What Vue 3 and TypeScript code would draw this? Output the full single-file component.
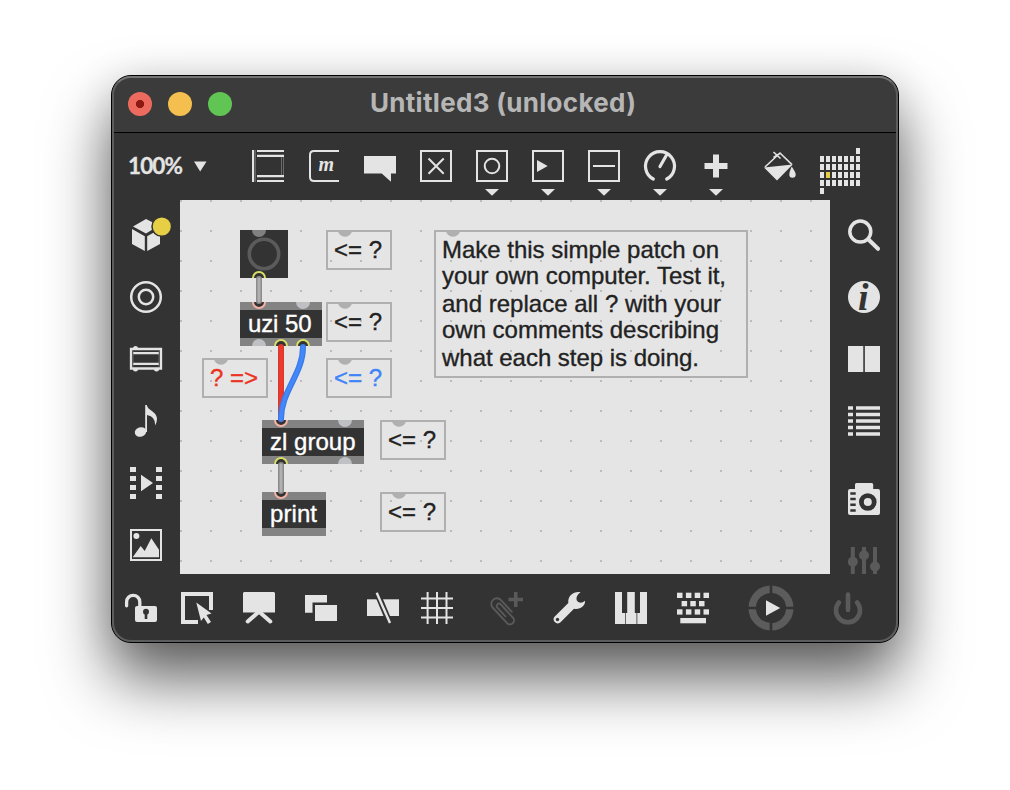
<script setup lang="ts">
interface Port { x: number; on: boolean }
interface Box { x: number; y: number; w: number; label: string; tw: number; inlets: Port[]; outlets: Port[] }
interface Comment { x: number; y: number; w: number; h: number; lines: string[]; widths: number[]; tone: string }

const boxes: Box[] = [
  { x: 240, y: 302, w: 82, label: 'uzi 50', tw: 63.5, inlets: [{ x: 259, on: true }, { x: 303, on: false }], outlets: [{ x: 259, on: false }, { x: 281, on: true }, { x: 303, on: true }] },
  { x: 262, y: 420, w: 102, label: 'zl group', tw: 85.5, inlets: [{ x: 281, on: true }, { x: 345, on: false }], outlets: [{ x: 281, on: true }, { x: 345, on: false }] },
  { x: 262, y: 492, w: 64, label: 'print', tw: 47, inlets: [{ x: 281, on: true }], outlets: [] },
]
const note = (x: number, y: number, text = '<= ?', tone = 'ink'): Comment =>
  ({ x, y, w: 66, h: 40, lines: [text], widths: [48], tone })
const comments: Comment[] = [
  note(326, 230), note(326, 302), note(202, 358, '? =>', 'red'), note(326, 358, '<= ?', 'blue'), note(380, 420), note(380, 492),
  {
    x: 434, y: 230, w: 314, h: 148, tone: 'ink',
    lines: ['Make this simple patch on', 'your own computer. Test it,', 'and replace all ? with your', 'own comments describing', 'what each step is doing.'],
    widths: [277, 284, 279, 277, 257],
  },
]
// Baselines of wrapped comment text, measured from the top of the box
const baselines: number[] = [28, 54, 82, 108, 136]
const cells: { x: number; y: number; hot: boolean }[] = [{ x: 36, y: 0, hot: false }, { x: 0, y: 40, hot: false }]
for (let r = 0; r < 4; r++) for (let c = 0; c < 7; c++) cells.push({ x: c * 6, y: 8 + r * 8, hot: r === 2 && c === 1 })
const keys: number[][] = [[0, .7], [8.9, .7], [17.7, .7], [26.5, .7], [4.6, 9], [13.3, 9], [22, 9], [0, 17.3], [8.9, 17.3], [17.7, 17.3], [26.5, 17.3]]
</script>

<template>
  <div class="desk">
    <div class="window">
      <header class="titlebar">
        <i class="light close"></i><i class="light min"></i><i class="light max"></i>
        <h1><svg width="268" height="36"><text x="0" y="26" textLength="266">Untitled3 (unlocked)</text></svg></h1>
      </header>

      <div class="toolbar">
        <div class="zoom">
          <svg width="80" height="32"><text x="0" y="24" textLength="55">100%</text><path d="M66 11.500H78.500L72.200 21.500Z" /></svg>
        </div>
        <div class="tools">
          <svg class="ic" viewBox="0 0 32 32"><path d="M0 0H2.200V32H0ZM5 0H32V2.100H5ZM5 4.700H32V6.900H5ZM5 25H32V27.200H5ZM5 29.900H32V32H5Z" /><path class="faint" d="M3.400 0V32M29.500 7V25M31.500 7V25" /></svg>
          <svg class="ic" viewBox="0 0 32 32"><path class="ln" d="M31 1H6Q2 1 2 5V27Q2 31 6 31H31" /><text class="m" x="10.500" y="21" textLength="15.500">m</text></svg>
          <svg class="ic" viewBox="0 0 32 32"><path d="M0 6H32V23.500H27V31.700L17.700 23.500H0Z" /></svg>
          <svg class="ic" viewBox="0 0 32 32"><path class="ln" d="M1 1H31V31H1ZM8.500 8.500L23.700 23.700M23.700 8.500L8.500 23.700" /></svg>
          <svg class="ic" viewBox="0 0 32 32"><path class="ln" d="M1 1H31V31H1Z" /><circle class="ln" cx="16" cy="16" r="7.300" /><path d="M9 39H23L16 45.800Z" /></svg>
          <svg class="ic" viewBox="0 0 32 32"><path class="ln" d="M1 1H31V31H1Z" /><path d="M5 10L15.700 16L5 22Z" /><path d="M9 39H23L16 45.800Z" /></svg>
          <svg class="ic" viewBox="0 0 32 32"><path class="ln" d="M1 1H31V31H1ZM5 16H27" /><path d="M9 39H23L16 45.800Z" /></svg>
          <svg class="ic" viewBox="0 0 32 32"><path class="ln dial" d="M9.300 29A14.500 14.500 0 1 1 22.700 29M16 16.500L22 6" /><path d="M9 39H23L16 45.800Z" /></svg>
          <svg class="ic" viewBox="0 0 32 32"><path d="M13 4.500H19V13H27.500V19H19V27.500H13V19H4.500V13H13Z" /><path d="M9 39H23L16 45.800Z" /></svg>
          <svg class="ic bucket" viewBox="0 0 32 32"><path d="M0 17.600L28.700 14.600L13 30.600Z" /><path class="ln fine" d="M1 17L16 3L28 14.600M9.500 2L16.500 8.500M9.500 7.500L16.500 3" /><path d="M27.700 16.500Q31.800 22.500 31.700 24.500A3.200 3.200 0 0 1 25.300 24.500Q25.300 22 27.700 16.500Z" /></svg>
        </div>
        <svg class="matrix" width="40" height="46"><rect v-for="(c, i) in cells" :key="i" :x="c.x" :y="c.y" width="4" height="6" :class="{ hot: c.hot }" /></svg>
      </div>

      <main class="middle">
        <nav class="side">
          <svg class="ic" viewBox="0 0 32 32"><path d="M16 0L29 6.500L16 14.500L3 7.500ZM2 10L14.800 17.200V32L2 25ZM17.200 17.200L30 10V25L17.200 32Z" /><circle class="badge" cx="31.800" cy="7.500" r="9.800" /></svg>
          <svg class="ic" viewBox="0 0 32 32"><circle class="ln ring" cx="16" cy="16" r="14.800" /><circle class="ln ring" cx="16" cy="16" r="7.200" /></svg>
          <svg class="ic" viewBox="0 0 32 32"><path class="ln amp" d="M1 6H31V25.500H1ZM3 10.200H29M3 20.800H29" /><path class="faint" d="M3 8V24M29 8V24" /><path d="M3 5.500A2.500 2.500 0 0 1 8 5.500ZM3 26A2.500 2.500 0 0 0 8 26ZM24 26A2.500 2.500 0 0 0 29 26Z" /></svg>
          <svg class="ic" viewBox="0 0 32 32"><ellipse cx="10.500" cy="27" rx="5.800" ry="4.700" transform="rotate(-18 10.500 27)" /><path d="M15.200 0H16.800C17.500 5.500 26.500 6 27 13.500Q27 17.500 25.200 20.500Q25.700 11.500 17 10V27H15.200Z" /></svg>
          <svg class="ic" viewBox="0 0 32 32"><path d="M0 0H6V5H0ZM0 9H6V14H0ZM0 18H6V23H0ZM0 27H6V32H0ZM26 0H32V5H26ZM26 9H32V14H26ZM26 18H32V23H26ZM26 27H32V32H26ZM11 7.700L23 16L11 24.200Z" /></svg>
          <svg class="ic" viewBox="0 0 32 32"><path class="ln" d="M1 1H31V31H1Z" /><circle cx="6.400" cy="7" r="3" /><path d="M2.700 28.300L10.700 17L14.700 22L21.300 9.300L29 20.700V28.300Z" /></svg>
        </nav>

        <svg class="patcher" width="650" height="374" viewBox="180 200 650 374">
          <defs>
            <pattern id="dots" x="180" y="200" width="30" height="30" patternUnits="userSpaceOnUse"><rect class="dot" width="2" height="2" /></pattern>
          </defs>
          <rect class="bg" x="180" y="200" width="650" height="374" />
          <rect x="180" y="200" width="650" height="374" fill="url(#dots)" />

          <g v-for="(c, i) in comments" :key="'c' + i">
            <rect class="frame" :x="c.x + 1" :y="c.y + 1" :width="c.w - 2" :height="c.h - 2" />
            <path class="tab" :d="`M${c.x + 12} ${c.y}a7 6.800 0 0 0 14 0z`" />
            <text v-for="(l, n) in c.lines" :key="n" :class="c.tone" :x="c.x + 8" :y="c.y + baselines[n]" :textLength="c.widths[n]">{{ l }}</text>
          </g>

          <rect class="core" x="240" y="230" width="48" height="48" />
          <path class="dim" d="M252 230a7 7 0 0 0 14 0z" />
          <circle class="bang" cx="264" cy="254" r="14.700" />
          <path class="out" d="M253 278a6 6 0 0 1 12 0" />

          <g v-for="(b, i) in boxes" :key="'b' + i">
            <rect class="rail" :x="b.x" :y="b.y" :width="b.w" height="44" />
            <rect class="core" :x="b.x" :y="b.y + 8" :width="b.w" height="28" />
            <path v-for="(p, n) in b.inlets" :key="'i' + n" :class="p.on ? 'in' : 'idle'" :d="p.on ? `M${p.x - 6} ${b.y}a6 6 0 0 0 12 0` : `M${p.x - 7} ${b.y}a7 7 0 0 0 14 0z`" />
            <path v-for="(p, n) in b.outlets" :key="'o' + n" :class="p.on ? 'out' : 'idle'" :d="p.on ? `M${p.x - 6} ${b.y + 44}a6 6 0 0 1 12 0` : `M${p.x - 7} ${b.y + 44}a7 7 0 0 1 14 0z`" />
            <text class="label" :x="b.x + 8" :y="b.y + 29.500" :textLength="b.tw">{{ b.label }}</text>
          </g>

          <path class="wire edge" d="M259 279V301M281 465V491" />
          <path class="wire" d="M259 279V301M281 465V491" />
          <path class="wire red-edge" d="M281 347V419" />
          <path class="wire red-line" d="M281 347V419" />
          <path class="wire blue-edge" d="M303 347C303 374 281 391 281 419" />
          <path class="wire blue-line" d="M303 347C303 374 281 391 281 419" />
        </svg>

        <nav class="side right">
          <svg class="ic" viewBox="0 0 32 32"><circle class="ln lens" cx="12.300" cy="12.600" r="10.500" /><path class="ln handle" d="M20.500 20.500L30 29.800" /></svg>
          <svg class="ic" viewBox="0 0 32 32"><circle cx="16" cy="16" r="16" /><text class="info" x="10" y="28.500">i</text></svg>
          <svg class="ic" viewBox="0 0 32 32"><path d="M0 3H15.200V29H0ZM17 3H32V29H17Z" /><path class="faint" d="M16 3V29" /></svg>
          <svg class="ic" viewBox="0 0 32 32"><path d="M0 1.200H5V4.800H0ZM8 1.200H32V4.800H8ZM0 7.700H5V11.300H0ZM8 7.700H32V11.300H8ZM0 14.200H5V17.800H0ZM8 14.200H32V17.800H8ZM0 20.700H5V24.300H0ZM8 20.700H32V24.300H8ZM0 27.200H5V30.800H0ZM8 27.200H32V30.800H8Z" /></svg>
          <svg class="ic camera" viewBox="0 0 32 32"><path d="M7 6V1.500Q7 0 8.500 0H23.700Q25.200 0 25.200 1.500V6H30Q32 6 32 8V30Q32 32 30 32H2Q0 32 0 30V8Q0 6 2 6Z" /><circle class="hole" cx="19.800" cy="19" r="6.400" /><path class="cut" d="M2.300 9.200H7.700V11.700H2.300ZM2.300 14.800H7.700V17.300H2.300ZM2.300 20.500H7.700V23H2.300ZM2.300 26.200H7.700V28.700H2.300Z" /></svg>
          <svg class="ic off mixer" viewBox="0 0 32 29"><path d="M2.800 2H6.800V29H2.800ZM14 2H18V29H14ZM25 2H29V29H25Z" /><circle cx="4.800" cy="16.800" r="5" /><circle cx="16" cy="10.300" r="5" /><circle cx="27" cy="21.500" r="5" /></svg>
        </nav>
      </main>

      <footer class="dock">
        <svg class="ic" viewBox="0 0 32 32"><path d="M12 14H30Q32 14 32 16V28Q32 30 30 30H12Q10 30 10 28V16Q10 14 12 14Z" /><path class="ln shackle" d="M1.600 13.800V9.900A6.600 6.600 0 0 1 14.800 9.900V14" /><circle class="cut" cx="21" cy="19.700" r="3" /><path class="cut" d="M19.700 20H22.300V27H19.700Z" /></svg>
        <svg class="ic g24" viewBox="0 0 32 32"><path d="M32 18H28V4H4V28H17V32H0V0H32Z" /><path d="M15.300 10.500L30.500 21.500L25.500 23L30 30L26.800 32L22.800 25.500L20 29Z" /></svg>
        <svg class="ic g30" viewBox="0 0 32 32"><path d="M1 0H31L32 1V20.500H0V1Z" /><path class="ln leg" d="M4.700 29.500L15 20.500H17L27.300 29.500" /></svg>
        <svg class="ic g30" viewBox="0 0 32 32"><path d="M0 3H22V10.500H7.500V20.700H0ZM10 13H32V29H10Z" /></svg>
        <svg class="ic g30" viewBox="0 0 32 32"><path d="M0 7.300H32V24H0Z" /><path class="gap" d="M9.500 -.5L23.500 33" /><path class="ln slash" d="M9.700 .7L23 31" /></svg>
        <svg class="ic g22" viewBox="0 0 32 32"><path class="ln" d="M6.600 0V32M16 0V32M25.500 0V32M0 6.600H32M0 16H32M0 25.600H32" /></svg>
        <svg class="ic g38 off" viewBox="0 0 32 32"><path class="ln clip" transform="translate(12 18.500) rotate(47)" d="M7 -5.600H-9A5.600 5.600 0 0 0 -9 5.600H12A4 4 0 0 0 12 -2.400H-6A2.300 2.300 0 0 0 -6 2.200H6" /><path d="M23 0H26.500V5.700H32V9.200H26.500V15H23V9.200H17.500V5.700H23Z" /></svg>
        <svg class="ic g30" viewBox="0 0 32 32"><path d="M27.600 .2C21 -1 14.500 3.500 15.300 11L1.500 24.800A4.100 4.100 0 0 0 7 30.700L21 16.800C27 18 32.500 14 32 8.800C29.500 11 26.500 11.500 24.500 9.300C22.500 7 23.500 3 27.600 .2Z" /><circle class="cut" cx="4.500" cy="27.500" r="1.700" /></svg>
        <svg class="ic g30" viewBox="0 0 32 32"><path d="M0 0H7V21H10.300V32H0ZM12.200 0H19.800V21H21.500V32H11V21H12.200ZM25 0H32V32H22.300V21H25Z" /></svg>
        <svg class="ic g30" viewBox="0 0 32 32"><rect v-for="(k, i) in keys" :key="i" :x="k[0]" :y="k[1]" width="5.500" height="5.300" /><path d="M3.300 26H29V31.300H3.300Z" /></svg>
        <svg class="wheel" width="46" height="46" viewBox="-23 -23 46 46"><circle r="18.800" /><path class="gap4" d="M0 -23V23M-23 0H23" /><path class="tri" d="M-5 -7.800L9.200 0L-5 7.800Z" /></svg>
        <svg class="ic power off" viewBox="0 0 32 32"><path class="ln pw" d="M6.900 10.500A12 12 0 1 0 25.100 10.500M16 2.500V18" /></svg>
      </footer>
    </div>
  </div>
</template>

<style>
body { margin: 0; background: #fff; overflow: hidden; }
</style>
<style scoped>
.desk { width: 1010px; height: 790px; box-sizing: border-box; padding: 75px 111px; overflow: hidden; background: #fff; }
.window {
  position: relative; box-sizing: border-box; width: 788px; height: 568px; border: 1px solid #000; border-radius: 20px;
  background: #333; font-family: "Liberation Sans", sans-serif;
  box-shadow: 0 36px 64px rgba(0, 0, 0, .62), 0 4px 40px rgba(0, 0, 0, .12);
}
.window::after { content: ""; position: absolute; inset: 0; border: 2px solid #5c5d5e; border-top-color: #757575; border-radius: 19px; pointer-events: none; }
.titlebar { display: flex; align-items: center; height: 56px; border-bottom: 1px solid #000; background: #3b3b3b; border-radius: 19px 19px 0 0; padding-left: 16px; }
.light { width: 24px; height: 24px; margin-right: 16px; border-radius: 50%; }
.close { background: radial-gradient(circle, #8c1a10 3.800px, #ec6a5e 4.400px); }
.min { background: #f5bf4f; }
.max { background: #61c554; }
h1 { margin: 0 0 0 122px; height: 36px; font-size: 26px; }
h1 svg { display: block; }
h1 text { fill: #b6b6b6; font: 700 26px Inter, sans-serif; }
svg { display: block; flex: none; fill: #e4e4e4; overflow: visible; }
.ic { width: 32px; height: 32px; }
.toolbar { display: flex; height: 67px; align-items: flex-start; }
.zoom { width: 124px; padding: 17px 0 0 16px; }
.zoom text { font: 700 22.500px Lato, sans-serif; stroke: #e4e4e4; stroke-width: .3; }
.tools { display: flex; gap: 24px; padding-top: 17px; }
.bucket { margin-left: 8px; }
.matrix { margin: 15px 0 0 24px; }
.hot { fill: #e6cf45; }
.ln { fill: none; stroke: #e4e4e4; stroke-width: 2; }
.faint { fill: none; stroke: #777; stroke-width: .8; }
.amp { stroke-width: 2.300; }
.dial { stroke-width: 3.200; stroke-linecap: round; }
.fine { stroke-width: 1.600; }
.m { font: italic 700 20px "Liberation Serif", serif; }
.middle { display: flex; height: 374px; }
.side { display: flex; flex-direction: column; width: 50px; padding: 19px 0 0 18px; gap: 30px; box-sizing: content-box; }
.badge { fill: #e6cf45; stroke: #333; stroke-width: 1.500; }
.ring { stroke-width: 2.500; }
.lens { stroke-width: 3.500; }
.handle { stroke-width: 4; stroke-linecap: round; }
.info { fill: #333; font: italic 700 38px "Liberation Serif", serif; }
.camera { margin-top: 16px; }
.hole { fill: #e4e4e4; stroke: #333; stroke-width: 4.800; }
.cut { fill: #333; }
.off { fill: #5a5a5a; }
.off .ln { stroke: #5a5a5a; }
.mixer { height: 29px; overflow: hidden; }
.patcher { overflow: hidden; }
.bg { fill: #e5e5e5; }
.dot { fill: #bcbcbc; }
.frame { fill: none; stroke: #b0b0b0; stroke-width: 2; }
.tab { fill: #b0b0b0; }
.patcher text { font-size: 24px; white-space: pre; stroke-width: .35; }
.ink { fill: #222; stroke: #222; }
.red { fill: #ea3323; stroke: #ea3323; }
.blue { fill: #3d84f7; stroke: #3d84f7; }
.label { fill: #fff; stroke: #fff; }
.core { fill: #333; }
.rail { fill: #838383; }
.dim { fill: #808080; }
.bang { fill: none; stroke: #5b5b5b; stroke-width: 3.600; }
.in { fill: #333; stroke: #f5b3a5; stroke-width: 2; }
.out { fill: #333; stroke: #d9df66; stroke-width: 2; }
.idle { fill: #bfc0c3; }
.wire { fill: none; stroke: #b0b0b0; stroke-width: 3; stroke-linecap: round; }
.edge { stroke: #8b8b8b; stroke-width: 6; }
.red-edge { stroke: #d63a30; stroke-width: 6; }
.red-line { stroke: #ee3a2c; stroke-width: 3.500; }
.blue-edge { stroke: #3c7ae6; stroke-width: 6; }
.blue-line { stroke: #4388fb; stroke-width: 3.500; }
.dock { display: flex; height: 68px; padding-left: 13px; align-items: flex-start; }
.dock .ic { margin-top: 18px; }
.g24 { margin-left: 24px; }
.g30 { margin-left: 30px; }
.g22 { margin-left: 22px; }
.g38 { margin-left: 38px; }
.shackle { stroke-width: 3.300; stroke-linecap: round; }
.leg { stroke-width: 4; stroke-linecap: round; }
.gap { fill: none; stroke: #333; stroke-width: 6; }
.slash { stroke-width: 2.400; }
.clip { stroke-width: 1.900; stroke-linecap: round; }
.wheel { margin: 11px 0 0 39px; }
.wheel circle { fill: none; stroke: #5c5c5c; stroke-width: 7.500; }
.gap4 { stroke: #333; stroke-width: 2.600; }
.tri { fill: #e4e4e4; }
.power { margin-left: 38px; }
.pw { stroke-width: 4.600; stroke-linecap: round; }
</style>
